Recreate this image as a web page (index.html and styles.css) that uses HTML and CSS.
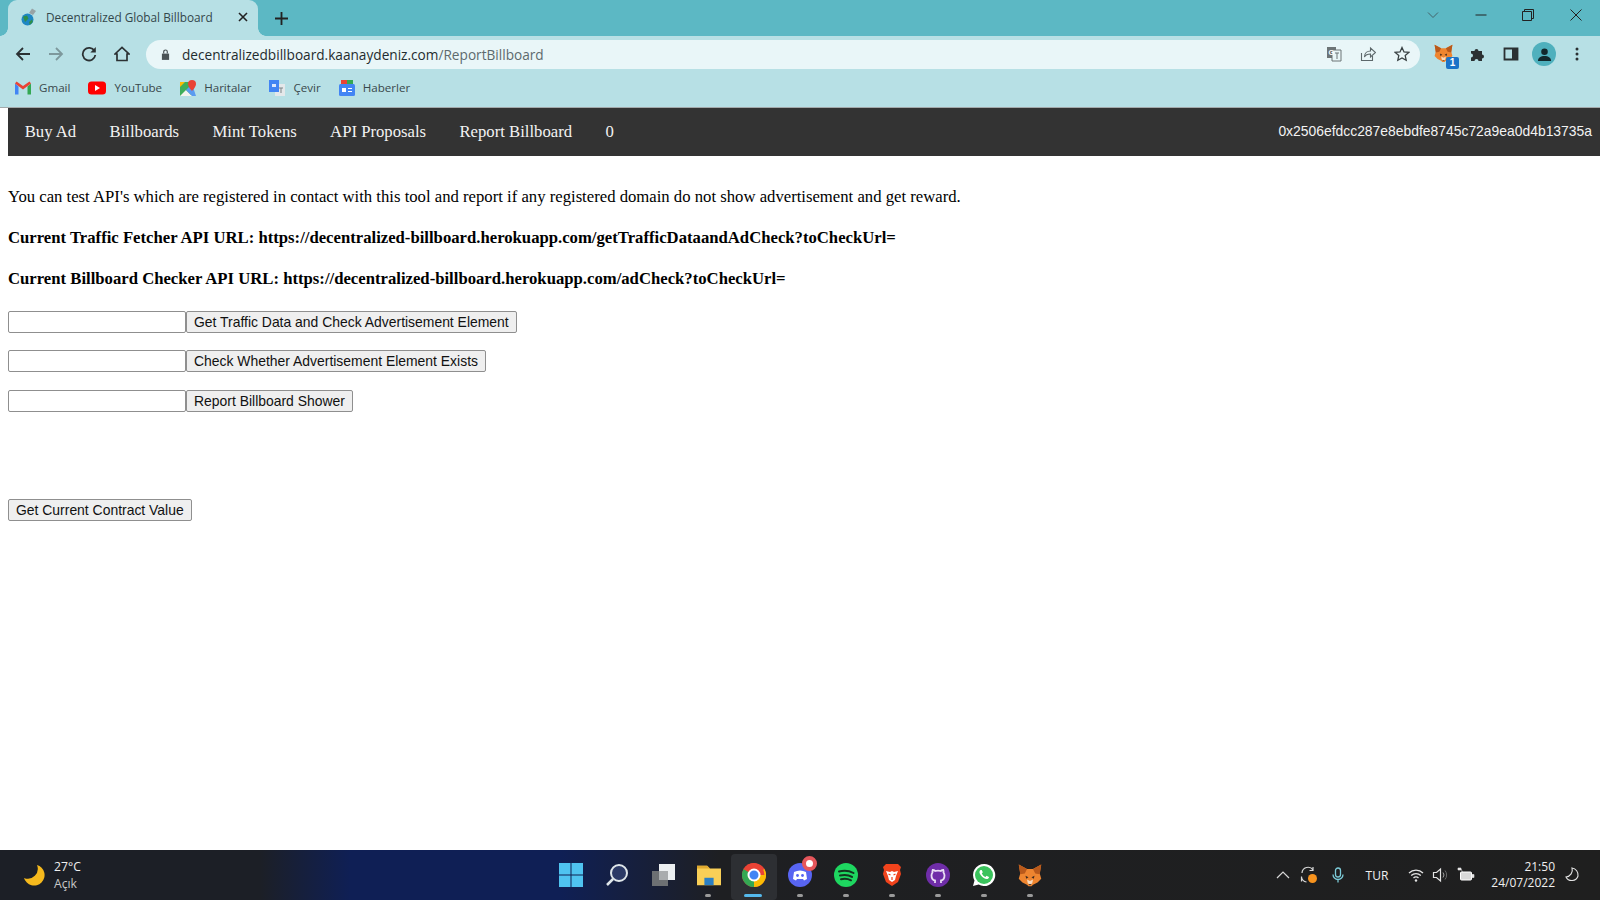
FILE: index.html
```html
<!DOCTYPE html>
<html lang="tr">
<head>
    <meta charset="UTF-8">
    <title>Decentralized Global Billboard</title>
    <link rel="stylesheet" href="styles.css">
</head>
<body>

<svg class="defs" width="0" height="0">
    <symbol id="fox" viewBox="0 0 32 30">
        <path d="M1 1l11 6h8l11-6-2 12 2 7-5 5-6 3-2 2h-4l-2-2-6-3-5-5 2-7z" fill="#ee8530"/>
        <path d="M1 1l11 6-3 6-6 1zM31 1l-11 6 3 6 6 1z" fill="#b9591b"/>
        <path d="M10 16l4 2-3 2zM22 16l-4 2 3 2z" fill="#3b2a20"/>
        <path d="M12 21l4 2 4-2-1 5-3 2-3-2z" fill="#f5d9bf"/>
        <path d="M14 27h4l-2 1.500z" fill="#2a2a2a"/>
    </symbol>
</svg>

<!-- Tab strip -->
<div class="tabstrip">
    <div class="tab">
        <svg class="favicon" viewBox="0 0 16 18">
            <circle cx="6.500" cy="11.500" r="6" fill="#1f87c4"/>
            <path d="M2 8.500l4-1 1.500 3-3.500 3.500zM8 14l3-2.500 .8 2.500-3 3z" fill="#2f8f4a"/>
            <path d="M8 5l3-4.500 4 2.500-3 4z" fill="#98a3a6"/>
        </svg>
        <span class="tab-title">Decentralized Global Billboard</span>
        <svg class="tab-close" viewBox="0 0 10 10"><path d="M1 1l8 8M9 1l-8 8" stroke="#222" stroke-width="1.600"/></svg>
    </div>
    <svg class="new-tab" viewBox="0 0 12 12"><path d="M6 0v12M0 6h12" stroke="#222" stroke-width="1.700"/></svg>
    <div class="window-controls">
        <svg class="win-btn" viewBox="0 0 12 12"><path d="M1 3.500l5 5 5-5" fill="none" stroke="#44636a" stroke-width="1"/></svg>
        <svg class="win-btn" viewBox="0 0 12 12"><path d="M.5 6h11" stroke="#222" stroke-width="1"/></svg>
        <svg class="win-btn" viewBox="0 0 12 12"><path d="M.5 2.500h9v9h-9zM2.500 2.500v-2h9v9h-2" fill="none" stroke="#222" stroke-width="1"/></svg>
        <svg class="win-btn" viewBox="0 0 12 12"><path d="M.5.500l11 11M11.500.500l-11 11" stroke="#222" stroke-width="1"/></svg>
    </div>
</div>

<!-- Toolbar -->
<div class="toolbar">
    <svg class="tool" viewBox="0 0 16 16"><path d="M15 8H2M8 2L2 8l6 6" fill="none" stroke="#2b3133" stroke-width="1.800"/></svg>
    <svg class="tool" viewBox="0 0 16 16"><path d="M1 8h13M8 2l6 6-6 6" fill="none" stroke="#7d989c" stroke-width="1.800"/></svg>
    <svg class="tool" viewBox="0 0 16 16"><path d="M13.500 5A6.300 6.300 0 1 0 14.300 9" fill="none" stroke="#2b3133" stroke-width="1.800"/><path d="M14.800 1v5.500H9.300z" fill="#2b3133"/></svg>
    <svg class="tool" viewBox="0 0 16 16"><path d="M1 8l7-6.500L15 8h-2v6.500H3V8z" fill="none" stroke="#2b3133" stroke-width="1.700"/></svg>
    <div class="omnibox">
        <svg class="lock" viewBox="0 0 10 12"><path d="M1 5h8v7H1z" fill="#4a5356"/><path d="M3 5V3a2 2 0 0 1 4 0v2" fill="none" stroke="#4a5356" stroke-width="1.300"/></svg>
        <span class="url">decentralizedbillboard.kaanaydeniz.com<span class="url-path">/ReportBillboard</span></span>
        <svg class="omni-icon" viewBox="0 0 16 16"><path d="M1 1h9v11H1z" fill="#6c7476"/><path d="M6 4h9v11H6z" fill="#e9f6f8" stroke="#6c7476"/><text x="2.500" y="9" class="omni-g">G</text><path d="M9 7h4M11 7v6" stroke="#6c7476"/></svg>
        <svg class="omni-icon" viewBox="0 0 16 16"><path d="M1.500 7v7.500h11V10" fill="none" stroke="#5d686b" stroke-width="1.100"/><path d="M4.500 11c0-4 3-6 6-6V2l5 4.500-5 4.500V8c-3 0-5 1-6 3z" fill="none" stroke="#5d686b" stroke-width="1.100"/></svg>
        <svg class="omni-icon" viewBox="0 0 16 16"><path d="M8 1.500l2 4.400 4.800.5-3.600 3.200 1 4.700L8 11.900l-4.200 2.400 1-4.700-3.600-3.200 4.800-.5z" fill="none" stroke="#3a4244" stroke-width="1.300"/></svg>
    </div>
    <div class="ext-fox">
        <svg class="fox-small"><use href="#fox"/></svg>
        <span class="ext-badge">1</span>
    </div>
    <svg class="tool" viewBox="0 0 16 16"><path d="M1 5h3.500a2 2 0 1 1 4 0H12v3.500a2 2 0 1 1 0 4V15H8.500a2 2 0 1 0-4 0H1v-3.500a2 2 0 1 0 0-4z" fill="#2b3133"/></svg>
    <svg class="tool" viewBox="0 0 16 16"><path d="M1.500 2.500h13v11h-13z" fill="none" stroke="#2b3133" stroke-width="1.800"/><path d="M9 2.500h5.500v11H9z" fill="#2b3133"/></svg>
    <div class="avatar">
        <svg viewBox="0 0 16 16" width="15" height="15"><circle cx="8" cy="5" r="3.500" fill="#12282c"/><path d="M1 15c0-4 3-5.500 7-5.500s7 1.500 7 5.500z" fill="#12282c"/></svg>
    </div>
    <svg class="tool dots" viewBox="0 0 16 16"><circle cx="8" cy="3" r="1.500" fill="#2b3133"/><circle cx="8" cy="8" r="1.500" fill="#2b3133"/><circle cx="8" cy="13" r="1.500" fill="#2b3133"/></svg>
</div>

<!-- Bookmarks -->
<div class="bookmarks">
    <div class="bookmark">
        <svg class="bm-icon" viewBox="0 0 16 13"><path d="M0 2v11h3.500V5z" fill="#4285f4"/><path d="M16 2v11h-3.500V5z" fill="#34a853"/><path d="M0 2l8 6 8-6-1.500-2L8 4.500 1.500 0z" fill="#ea4335"/></svg>
        <span>Gmail</span>
    </div>
    <div class="bookmark">
        <svg class="bm-icon bm-wide" viewBox="0 0 18 13"><rect width="18" height="13" rx="3.500" fill="#f00"/><path d="M7 3.500l5 3-5 3z" fill="#fff"/></svg>
        <span>YouTube</span>
    </div>
    <div class="bookmark">
        <svg class="bm-icon" viewBox="0 0 16 16"><path d="M0 2h11v14H0z" fill="#3fae5a"/><path d="M0 16l6-6 6 6z" fill="#f4f4ee"/><path d="M0 2h5L0 7z" fill="#fbbc04"/><path d="M6 10l6-6 4 12h-4z" fill="#5b9bf0"/><path d="M12 0a4 4 0 0 1 4 4c0 3-4 7-4 7s-4-4-4-7a4 4 0 0 1 4-4z" fill="#ea4335"/></svg>
        <span>Haritalar</span>
    </div>
    <div class="bookmark">
        <svg class="bm-icon" viewBox="0 0 16 16"><path d="M6 4h10v12H6z" fill="#e4e8ea"/><path d="M0 0h10v12H0z" fill="#4285f4"/><path d="M3 4h4v3H3z" fill="#dbe8fd"/><path d="M10 8h4M12 8v5" stroke="#7d8587"/></svg>
        <span>Çevir</span>
    </div>
    <div class="bookmark">
        <svg class="bm-icon" viewBox="0 0 16 16"><path d="M2 0h12v5H2z" fill="#34a853"/><path d="M2 0h6v5H2z" fill="#ea4335"/><rect y="4" width="16" height="12" rx="1.500" fill="#4285f4"/><path d="M3 8h4v4H3zM9 8h4v1H9zM9 11h4v1H9z" fill="#fff"/></svg>
        <span>Haberler</span>
    </div>
</div>

<!-- Page -->
<main class="page">
    <nav class="navbar">
        <div class="nav-links">
            <a class="nav-item">Buy Ad</a>
            <a class="nav-item">Billboards</a>
            <a class="nav-item">Mint Tokens</a>
            <a class="nav-item">API Proposals</a>
            <a class="nav-item">Report Billboard</a>
            <a class="nav-item">0</a>
        </div>
        <div class="wallet">0x2506efdcc287e8ebdfe8745c72a9ea0d4b13735a</div>
    </nav>

    <p class="intro">You can test API's which are registered in contact with this tool and report if any registered domain do not show advertisement and get reward.</p>
    <p class="api-url">Current Traffic Fetcher API URL: https://decentralized-billboard.herokuapp.com/getTrafficDataandAdCheck?toCheckUrl=</p>
    <p class="api-url">Current Billboard Checker API URL: https://decentralized-billboard.herokuapp.com/adCheck?toCheckUrl=</p>

    <div class="form-row first-row"><input type="text" class="url-input"><button class="action-button">Get Traffic Data and Check Advertisement Element</button></div>
    <div class="form-row second-row"><input type="text" class="url-input"><button class="action-button">Check Whether Advertisement Element Exists</button></div>
    <div class="form-row"><input type="text" class="url-input"><button class="action-button">Report Billboard Shower</button></div>

    <div class="contract-row"><button class="action-button">Get Current Contract Value</button></div>
</main>

<!-- Taskbar -->
<footer class="taskbar">
    <div class="weather">
        <svg class="moon" viewBox="0 0 22 22"><path d="M14 1a10 10 0 0 1-13 13 10.500 10.500 0 1 0 13-13z" fill="#f5b91d"/></svg>
        <div class="weather-text">
            <div class="temp">27°C</div>
            <div class="sky">Açık</div>
        </div>
    </div>

    <div class="task-icons">
        <div class="task-icon">
            <svg class="app" viewBox="0 0 24 24"><path d="M0 0h11.500v11.500H0zM12.500 0H24v11.500H12.500zM0 12.500h11.500V24H0zM12.500 12.500H24V24H12.500z" fill="#4fc3f0"/></svg>
        </div>
        <div class="task-icon">
            <svg class="app" viewBox="0 0 24 24"><circle cx="14" cy="10" r="8" fill="#2c3a66" stroke="#dfe6ea" stroke-width="2"/><path d="M8 16l-6 6" stroke="#dfe6ea" stroke-width="2.500"/></svg>
        </div>
        <div class="task-icon">
            <svg class="app" viewBox="0 0 24 24"><path d="M8 1h16v16H8z" fill="#eceff1"/><path d="M1 8h16v15H1z" fill="#6d7073"/><path d="M8 8h9v9H8z" fill="#a9acae"/></svg>
        </div>
        <div class="task-icon running">
            <svg class="app" viewBox="0 0 26 24"><path d="M0 2h11l3 3h12v18H0z" fill="#f9cf57"/><path d="M0 2h11l3 3H0z" fill="#e0a92f"/><path d="M8 15h10v8H8z" fill="#2b7fc4"/></svg>
        </div>
        <div class="task-icon active">
            <svg class="app" viewBox="0 0 24 24"><circle cx="12" cy="12" r="12" fill="#ea4335"/><path d="M12 12L1.600 6A12 12 0 0 0 12 24z" fill="#34a853"/><path d="M12 12v12A12 12 0 0 0 22.400 6z" fill="#fbbc04"/><path d="M12 0a12 12 0 0 0-10.400 6L12 12h10.400A12 12 0 0 0 12 0z" fill="#ea4335"/><circle cx="12" cy="12" r="5.500" fill="#4285f4" stroke="#fff" stroke-width="2"/></svg>
        </div>
        <div class="task-icon running">
            <div class="notify-wrap">
                <svg class="app" viewBox="0 0 24 24"><circle cx="12" cy="12" r="12" fill="#5865f2"/><path d="M6 9c4-2 8-2 12 0l1 7-3 1.500-1-1.500H9l-1 1.500L5 16z" fill="#fff"/><circle cx="9.500" cy="12.500" r="1.400" fill="#5865f2"/><circle cx="14.500" cy="12.500" r="1.400" fill="#5865f2"/></svg>
                <span class="notify-dot"></span>
            </div>
        </div>
        <div class="task-icon running">
            <svg class="app" viewBox="0 0 24 24"><circle cx="12" cy="12" r="12" fill="#1ed760"/><path d="M5 8.500c5-1.500 10-1 14.500 1.500M6 12.500c4-1 8.500-.7 12 1.400M7 16.200c3.500-.8 7-.5 10 1.100" fill="none" stroke="#14331f" stroke-width="2" stroke-linecap="round"/></svg>
        </div>
        <div class="task-icon running">
            <svg class="app" viewBox="0 0 24 24"><path d="M6 1h12l3 3-1 3 1 4-3 8-6 4-6-4-3-8 1-4-1-3z" fill="#f1431c"/><path d="M6 8l4 1 2-1 2 1 4-1-2 5-1 4-3 2-3-2-1-4z" fill="#fff"/><path d="M8.500 11l2 1M15.500 11l-2 1M12 14v3" stroke="#f1431c" stroke-width="1.200"/></svg>
        </div>
        <div class="task-icon running">
            <svg class="app" viewBox="0 0 24 24"><circle cx="12" cy="12" r="12" fill="#6f2da8"/><path d="M9 20v-2.500c-2.500-.5-3.500-2.500-3.500-5 0-1.200.4-2.200 1-3-.2-.8-.1-1.700.2-2.500 1 0 1.800.4 2.600 1a8.500 8.500 0 0 1 5.400 0c.8-.6 1.600-1 2.600-1 .3.800.4 1.700.2 2.500.6.800 1 1.800 1 3 0 2.500-1 4.500-3.500 5V20" fill="none" stroke="#e9ddf3" stroke-width="1.800"/></svg>
        </div>
        <div class="task-icon running">
            <svg class="app" viewBox="0 0 24 24"><path d="M12 1a11 11 0 0 0-9.500 16.500L1 23l5.700-1.500A11 11 0 1 0 12 1z" fill="#fff"/><circle cx="12" cy="12" r="9" fill="#3ac35c"/><path d="M8.500 7c-1.500 1-1.500 3 .5 5.500s4.500 4 6.500 3.500c1.200-.4 1.500-1.500 1.500-2l-2.500-1.300-1 1.200c-1.500-.5-3-2-3.700-3.500l1-1.100L9.700 7z" fill="#fff"/></svg>
        </div>
        <div class="task-icon running">
            <svg class="app"><use href="#fox"/></svg>
        </div>
    </div>

    <div class="tray">
        <svg class="tray-icon" viewBox="0 0 16 16"><path d="M2 11l6-6 6 6" fill="none" stroke="#d8d8d8" stroke-width="1.200"/></svg>
        <svg class="tray-icon tray-sync" viewBox="0 0 18 18"><path d="M2 7a6 6 0 0 1 11-3M13 1v3.500H9.500M1.500 10.500v5M1.500 11a6 6 0 0 0 5 5" fill="none" stroke="#d8d8d8" stroke-width="1.200"/><circle cx="12.500" cy="12.500" r="4.500" fill="#f7931e"/></svg>
        <svg class="tray-icon tray-mic" viewBox="0 0 16 16"><rect x="5.500" y="1" width="5" height="9" rx="2.500" fill="none" stroke="#7ccbd8" stroke-width="1.300"/><path d="M3 7.500a5 5 0 0 0 10 0M8 13v2.500" fill="none" stroke="#7ccbd8" stroke-width="1.300"/></svg>
        <span class="tray-lang">TUR</span>
        <svg class="tray-icon tray-wifi" viewBox="0 0 16 16"><path d="M1 6a10 10 0 0 1 14 0M3.200 8.500a7 7 0 0 1 9.600 0M5.500 11a3.500 3.500 0 0 1 5 0" fill="none" stroke="#e4e4e4" stroke-width="1.300"/><circle cx="8" cy="13.500" r="1.200" fill="#e4e4e4"/></svg>
        <svg class="tray-icon tray-vol" viewBox="0 0 16 16"><path d="M1.500 5.500h3l4-3.500v12l-4-3.500h-3z" fill="none" stroke="#e4e4e4" stroke-width="1.200"/><path d="M11 5.500a4 4 0 0 1 0 5" fill="none" stroke="#a5a5a5" stroke-width="1"/><path d="M13 3.500a7 7 0 0 1 0 9" fill="none" stroke="#6a6a6a" stroke-width="1"/></svg>
        <svg class="tray-icon tray-batt" viewBox="0 0 18 16"><rect x="3.500" y="5" width="11" height="8" rx="1" fill="#d8d8d8" stroke="#fff"/><path d="M15 7.500h2v3h-2zM1 1h3v2H1zM4 2l1.500 3" fill="#e4e4e4" stroke="#e4e4e4" stroke-width=".6"/></svg>
        <div class="clock">
            <div>21:50</div>
            <div>24/07/2022</div>
        </div>
        <svg class="tray-icon tray-quiet" viewBox="0 0 16 16"><path d="M8 1a7 7 0 0 1-6 9 6.500 6.500 0 0 0 12-1A7 7 0 0 0 8 1z" fill="none" stroke="#e4e4e4" stroke-width="1.100"/></svg>
    </div>
</footer>

</body>
</html>
```

FILE: styles.css
```css
* {
    box-sizing: border-box;
}
html, body {
    height: 100%;
}
body {
    margin: 0;
    display: flex;
    flex-direction: column;
    height: 900px;
    overflow: hidden;
    background-color: #fff;
    font-family: "Liberation Serif", serif;
}
.defs {
    position: absolute;
}

/* Tab strip */
.tabstrip {
    display: flex;
    align-items: center;
    flex: none;
    height: 36px;
    padding-left: 8px;
    background-color: #5cb8c4;
}
.tab {
    position: relative;
    display: flex;
    align-items: center;
    width: 250px;
    height: 36px;
    padding: 0 10px 2px 13px;
    background-color: #b7e0e5;
    border-radius: 9px 9px 0 0;
}
/* concave corners where the tab meets the toolbar */
.tab::before,
.tab::after {
    content: "";
    position: absolute;
    bottom: 0;
    width: 8px;
    height: 8px;
}
.tab::before {
    left: -8px;
    background: radial-gradient(circle at 0 0, #5cb8c4 7.500px, #b7e0e5 8px);
}
.tab::after {
    right: -8px;
    background: radial-gradient(circle at 100% 0, #5cb8c4 7.500px, #b7e0e5 8px);
}
.favicon {
    width: 16px;
    height: 18px;
    flex: none;
}
.tab-title {
    flex: 1;
    margin-left: 9px;
    font-family: "Open Sans", sans-serif;
    font-size: 11.800px;
    color: #33474b;
    white-space: nowrap;
}
.tab-close {
    width: 10px;
    height: 10px;
    flex: none;
}
.new-tab {
    width: 13px;
    height: 13px;
    margin-left: 17px;
}
.window-controls {
    display: flex;
    align-items: center;
    gap: 35.500px;
    margin-left: auto;
    padding-right: 18.500px;
    padding-bottom: 6px;
}
.win-btn {
    width: 12px;
    height: 12px;
}

/* Toolbar */
.toolbar {
    display: flex;
    align-items: center;
    flex: none;
    gap: 17px;
    height: 36px;
    padding: 0 15px;
    background-color: #b7e0e5;
}
.tool {
    width: 16px;
    height: 16px;
    flex: none;
}
.omnibox {
    display: flex;
    align-items: center;
    flex: none;
    width: 1274px;
    height: 29px;
    margin-left: -1px;
    padding: 0 10px 0 15px;
    background-color: #e9f6f8;
    border-radius: 15px;
}
.lock {
    width: 9px;
    height: 11px;
    flex: none;
}
.url {
    flex: 1;
    margin-left: 12px;
    font-family: "Open Sans", sans-serif;
    font-size: 13.650px;
    color: #1f2b2e;
    white-space: nowrap;
}
.url-path {
    color: #5d6a6d;
}
.omni-icon {
    width: 16px;
    height: 16px;
    margin-left: 18px;
    flex: none;
}
.omni-g {
    font-family: "Liberation Sans", sans-serif;
    font-size: 7px;
    font-weight: bold;
    fill: #fff;
}
.ext-fox {
    position: relative;
    width: 20px;
    height: 20px;
    flex: none;
    margin: 0 -1px 0 -3px;
}
.fox-small {
    display: block;
    width: 19px;
    height: 18px;
}
.ext-badge {
    position: absolute;
    right: -5px;
    bottom: -5px;
    width: 13px;
    height: 12px;
    background-color: #1a73c8;
    border-radius: 2px;
    color: #fff;
    font-family: "Liberation Sans", sans-serif;
    font-size: 10px;
    font-weight: bold;
    line-height: 12px;
    text-align: center;
}
.avatar {
    display: flex;
    align-items: center;
    justify-content: center;
    width: 24px;
    height: 24px;
    flex: none;
    margin: 0 -4px 0 -4px;
    background-color: #4fb0bd;
    border-radius: 50%;
}

/* Bookmarks */
.bookmarks {
    display: flex;
    align-items: center;
    flex: none;
    gap: 18px;
    height: 36px;
    padding: 0 0 4px 15px;
    background-color: #b7e0e5;
    border-bottom: 1px solid #a3a9aa;
    font-family: "Open Sans", sans-serif;
    font-size: 11.600px;
    color: #39484b;
}
.bookmark {
    display: flex;
    align-items: center;
    gap: 8px;
}
.bm-icon {
    width: 16px;
    height: 16px;
    flex: none;
}
.bm-wide {
    width: 18px;
    height: 14px;
}

/* Page */
.page {
    flex: 1;
    padding: 0 0 0 8px;
}
.navbar {
    display: flex;
    align-items: center;
    justify-content: space-between;
    height: 48px;
    padding-right: 8px;
    background-color: #333;
    color: #f2f2f2;
}
.nav-links {
    display: flex;
}
.nav-item {
    padding: 0 16.700px;
    font-size: 16.700px;
}
.wallet {
    padding-bottom: 3px;
    font-family: "Liberation Sans", sans-serif;
    font-size: 13.900px;
}
.intro, .api-url {
    margin: 0;
    font-size: 16.700px;
    line-height: 19px;
    color: #000;
}
.intro {
    margin-top: 31px;
}
.api-url {
    margin-top: 22px;
    font-weight: bold;
}
.form-row {
    display: flex;
    margin-top: 18px;
    height: 22px;
}
.first-row {
    margin-top: 23px;
}
.second-row {
    margin-top: 17px;
}
.url-input {
    width: 178px;
    height: 22px;
    padding: 0 2px;
    background-color: #fff;
    border: 1px solid #8f8f8f;
    border-radius: 2px;
}
.action-button {
    height: 22px;
    padding: 0 7px;
    background-color: #efefef;
    border: 1px solid #8f8f8f;
    border-radius: 2px;
    font-family: "Liberation Sans", sans-serif;
    font-size: 13.930px;
    color: #111;
    white-space: nowrap;
}
.contract-row {
    display: flex;
    margin-top: 87px;
}

/* Taskbar */
.taskbar {
    display: grid;
    grid-template-columns: 1fr auto 1fr;
    align-items: center;
    flex: none;
    height: 50px;
    background: linear-gradient(90deg, #1c1f26 0, #1c1f26 260px, #0f1f55 350px, #0f1f55 560px, #1e1f22 720px, #1f1f1f 100%);
    color: #f0f0f0;
    font-family: "Open Sans", sans-serif;
}
.weather {
    display: flex;
    align-items: center;
    gap: 9px;
    padding-left: 23px;
}
.moon {
    width: 22px;
    height: 22px;
}
.weather-text {
    font-size: 12.200px;
    line-height: 17px;
}
.sky {
    color: #c8c8c8;
}
.task-icons {
    display: flex;
    height: 50px;
}
.task-icon {
    position: relative;
    display: flex;
    align-items: center;
    justify-content: center;
    width: 46px;
    height: 46px;
    margin-top: 4px;
    padding-bottom: 5px;
    border-radius: 4px;
}
.task-icon:nth-child(-n+4) {
    padding-left: 2px;
}
.app {
    display: block;
    width: 24px;
    height: 24px;
}
.task-icon.active {
    background-color: #2d2f33;
}
.task-icon.running::after,
.task-icon.active::after {
    content: "";
    position: absolute;
    bottom: 3px;
    left: 20px;
    width: 6px;
    height: 3px;
    background-color: #9a9a9a;
    border-radius: 2px;
}
.task-icon.active::after {
    left: 13px;
    width: 18px;
    background-color: #55b9ec;
}
.notify-wrap {
    position: relative;
}
.notify-dot {
    position: absolute;
    top: -7px;
    right: -5px;
    width: 15px;
    height: 15px;
    background-color: #fff;
    border: 4.500px solid #e5565b;
    border-radius: 50%;
}
.tray {
    display: flex;
    align-items: center;
    justify-content: flex-end;
    padding-right: 20px;
    font-size: 12px;
}
.tray-icon {
    width: 16px;
    height: 16px;
    flex: none;
}
.tray-sync {
    width: 18px;
    height: 18px;
    margin-left: 9px;
}
.tray-mic {
    margin-left: 12px;
}
.tray-lang {
    margin-left: 20px;
}
.tray-wifi {
    margin-left: 20px;
}
.tray-vol {
    margin-left: 8px;
}
.tray-batt {
    width: 18px;
    margin-left: 9px;
}
.clock {
    margin-left: 16px;
    line-height: 16px;
    text-align: right;
}
.tray-quiet {
    margin-left: 9px;
}
```
